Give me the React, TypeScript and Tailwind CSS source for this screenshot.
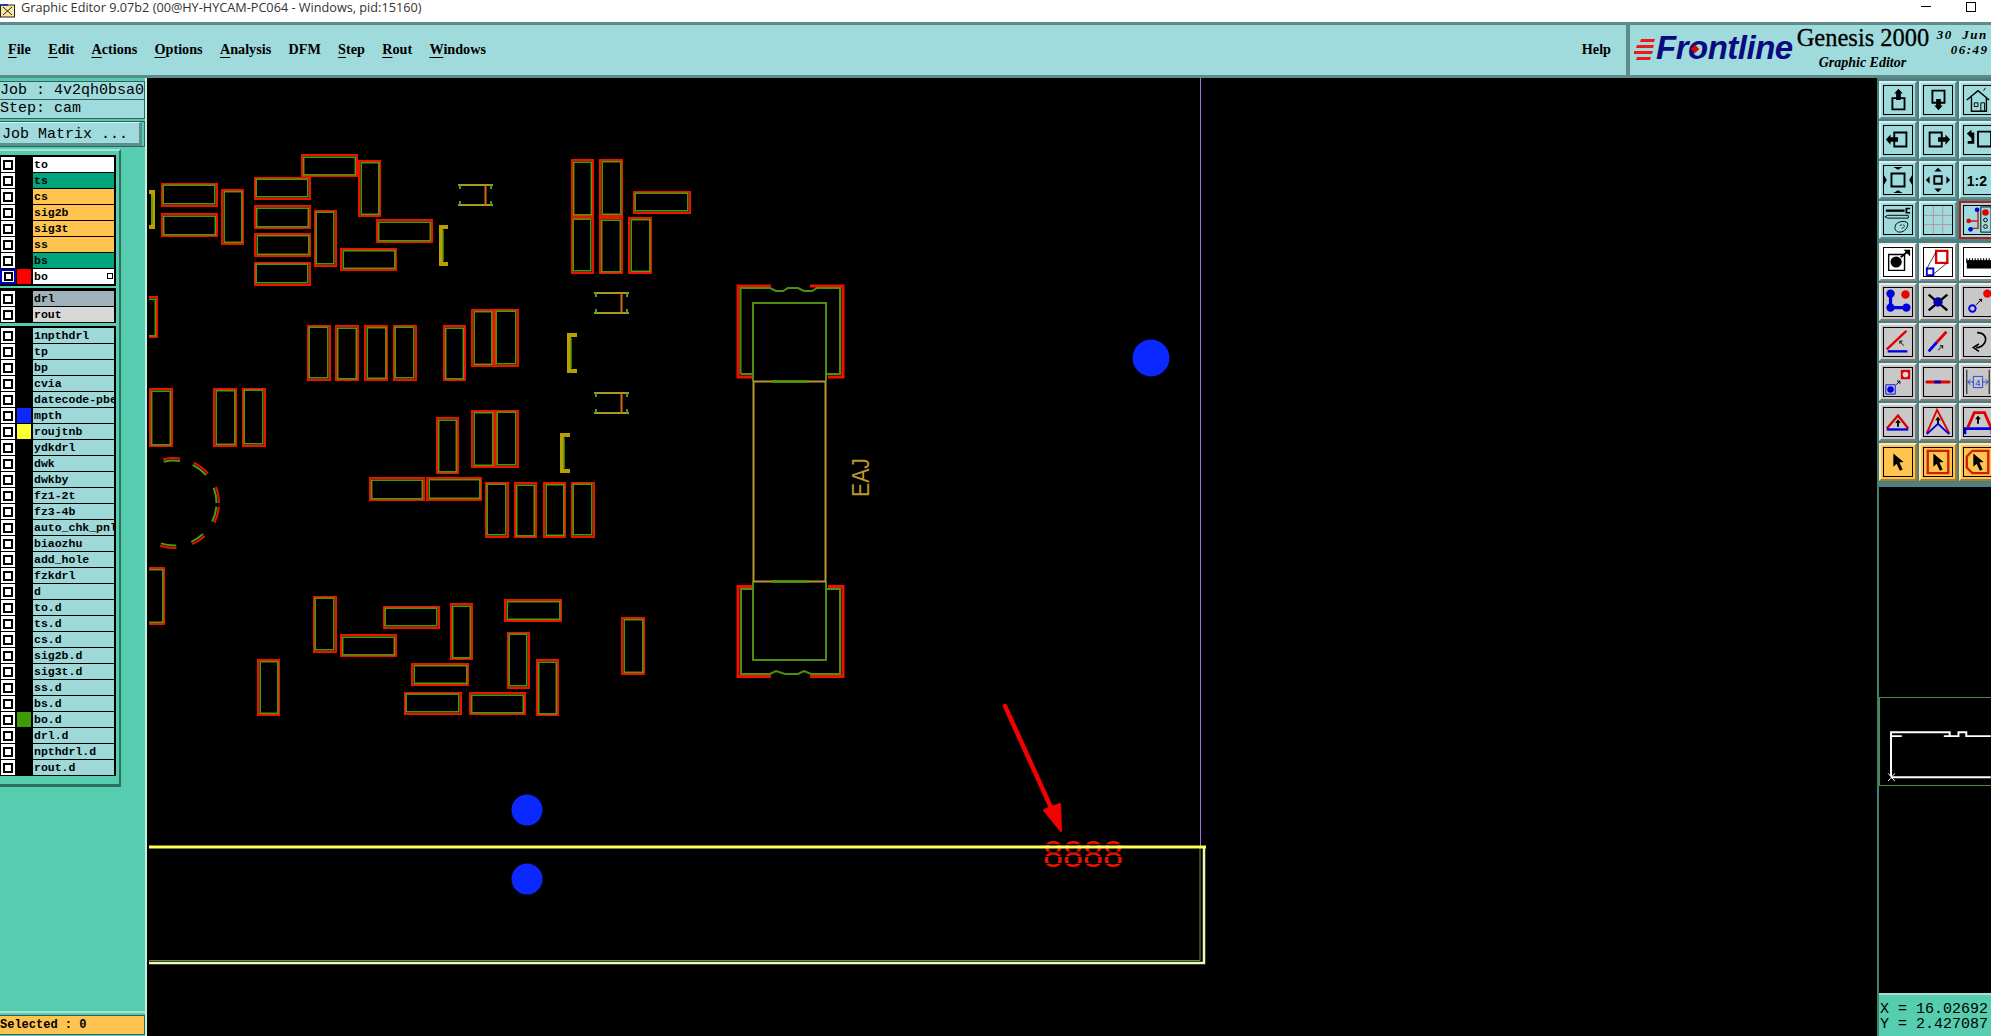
import type { ReactNode } from 'react';

const mono = "font-['Liberation_Mono',monospace] font-bold";

type Layer = { name: string; bg?: string; swatch?: string; active?: boolean };

const boardLayers: Layer[] = [
  { name: 'to', bg: 'bg-white' },
  { name: 'ts', bg: 'bg-[#00a57c]' },
  { name: 'cs', bg: 'bg-[#ffc44f]' },
  { name: 'sig2b', bg: 'bg-[#ffc44f]' },
  { name: 'sig3t', bg: 'bg-[#ffc44f]' },
  { name: 'ss', bg: 'bg-[#ffc44f]' },
  { name: 'bs', bg: 'bg-[#00a57c]' },
  { name: 'bo', bg: 'bg-white', swatch: 'bg-[#ff0000]', active: true },
];

const drillLayers: Layer[] = [
  { name: 'drl', bg: 'bg-[#9fb2ba]' },
  { name: 'rout', bg: 'bg-[#d8d8d8]' },
];

const miscLayers: Layer[] = [
  { name: '1npthdrl' },
  { name: 'tp' },
  { name: 'bp' },
  { name: 'cvia' },
  { name: 'datecode-pbe' },
  { name: 'mpth', swatch: 'bg-[#0a28ff]' },
  { name: 'roujtnb', swatch: 'bg-[#ffff33]' },
  { name: 'ydkdrl' },
  { name: 'dwk' },
  { name: 'dwkby' },
  { name: 'fz1-2t' },
  { name: 'fz3-4b' },
  { name: 'auto_chk_pnl' },
  { name: 'biaozhu' },
  { name: 'add_hole' },
  { name: 'fzkdrl' },
  { name: 'd' },
  { name: 'to.d' },
  { name: 'ts.d' },
  { name: 'cs.d' },
  { name: 'sig2b.d' },
  { name: 'sig3t.d' },
  { name: 'ss.d' },
  { name: 'bs.d' },
  { name: 'bo.d', swatch: 'bg-[#3f9a05]' },
  { name: 'drl.d' },
  { name: 'npthdrl.d' },
  { name: 'rout.d' },
];

const menus = ['File', 'Edit', 'Actions', 'Options', 'Analysis', 'DFM', 'Step', 'Rout', 'Windows'];

// x1, y1, x2, y2 in page pixels
const pads = [
  [161, 183, 218, 207], [161, 213, 218, 237], [221, 189, 244, 245], [254, 177, 311, 200],
  [254, 205, 311, 229], [254, 233, 311, 257], [254, 262, 311, 286], [301, 154, 358, 177],
  [358, 160, 381, 217], [314, 210, 337, 267], [376, 219, 433, 243], [340, 248, 397, 271],
  [307, 325, 331, 381], [335, 325, 359, 381], [364, 325, 388, 381], [393, 325, 417, 381],
  [443, 325, 466, 381], [471, 309, 494, 367], [494, 309, 519, 367],
  [149, 388, 173, 447], [213, 388, 237, 447], [242, 388, 266, 447],
  [436, 417, 459, 474], [471, 410, 495, 468], [495, 410, 519, 468],
  [369, 477, 425, 501], [426, 477, 482, 501], [485, 482, 509, 538], [514, 482, 537, 538],
  [543, 482, 566, 538], [571, 482, 595, 538],
  [571, 159, 594, 217], [599, 159, 623, 217], [571, 217, 594, 274], [599, 217, 623, 274],
  [628, 217, 652, 274], [633, 191, 691, 214],
  [130, 296, 158, 338], [130, 567, 165, 625], [313, 596, 337, 653], [340, 634, 397, 657],
  [257, 659, 280, 716], [383, 606, 440, 629], [450, 603, 473, 660], [504, 599, 562, 622],
  [507, 632, 530, 689], [536, 659, 559, 716], [411, 663, 469, 686], [404, 692, 462, 715],
  [469, 692, 526, 715], [621, 617, 645, 675],
];

const connectors = [
  [458, 184],
  [594, 292],
  [594, 392],
];

const ringArcs = [
  [-104, -82], [-64, -41], [-21, 0], [5, 26], [47, 66], [87, 108],
];

const arcPath = (r: number, from: number, to: number) => {
  const cx = 174;
  const cy = 503;
  const a = (from * Math.PI) / 180;
  const b = (to * Math.PI) / 180;
  return `M${cx + r * Math.cos(a)} ${cy + r * Math.sin(a)}A${r} ${r} 0 0 1 ${cx + r * Math.cos(b)} ${cy + r * Math.sin(b)}`;
};

const BoardView = () => (
  <svg className="block h-[958px] w-[1728px]" viewBox="149 78 1728 958" fill="none">
    <path d="M1200.5 78V847" stroke="#a070e0" strokeWidth="1" />
    {pads.map(([x1, y1, x2, y2]) => (
      <rect key={`r${x1}-${y1}`} x={x1 + 1} y={y1 + 1} width={x2 - x1 - 2} height={y2 - y1 - 2} stroke="#f01000" strokeWidth="2" />
    ))}
    <g stroke="#5a9a08" strokeWidth="1.5">
      {pads.map(([x1, y1, x2, y2], i) => {
        const dx = ((i * 7) % 3) * 0.5;
        const dy = ((i * 5) % 3) * 0.5;
        return <rect key={`g${x1}-${y1}`} x={x1 + 2.2 + dx} y={y1 + 2.2 + dy} width={x2 - x1 - 5.4} height={y2 - y1 - 5.4} />;
      })}
    </g>

    {connectors.map(([x, y]) => (
      <g key={`${x}-${y}`}>
        <path d={`M${x} ${y + 1}H${x + 35}M${x} ${y + 21}H${x + 35}`} stroke="#a89a20" strokeWidth="2" />
        <path d={`M${x + 27.5} ${y + 1}V${y + 21}`} stroke="#d06a10" strokeWidth="2" />
        <path d={`M${x + 2} ${y + 1}V${y + 5}M${x + 33} ${y + 1}V${y + 5}M${x + 2} ${y + 17}V${y + 21}M${x + 33} ${y + 17}V${y + 21}`} stroke="#4f9a10" strokeWidth="2" />
      </g>
    ))}

    <g stroke="#b8a000" strokeWidth="4">
      <path d="M448 227H441V264H448" />
      <path d="M577 335H569V371H577" />
      <path d="M570 435H562V471H570" />
      <path d="M149 192H153V227H149" />
    </g>
    <g stroke="#4f9a10" strokeWidth="1.5">
      <path d="M443 230V261M571 338V368M564 438V468M152 195V224" />
    </g>

    {ringArcs.map(([a, b]) => (
      <g key={a} strokeWidth="2">
        <path d={arcPath(45, a, b)} stroke="#e81000" />
        <path d={arcPath(42.5, a, b)} stroke="#4f9a10" />
      </g>
    ))}

    {/* connector part in the middle of the board */}
    <path d="M771 286H738V377H753M810 286H843V377H828M753 586.5H738V676.5H771M810 676.5H843V586.5H828" stroke="#f01000" strokeWidth="3" />
    <path d="M740.5 374V288H770L776 291H783L788 288H798L804 291H812L817 288H840V374H826M740.5 374H753M753 589H741V674H770L776 671L785 674H798L804 671L811 674H840V589H826" stroke="#4f8f10" strokeWidth="2" />
    <path d="M753 381V303H826V381M753 581V660H826V581" stroke="#4f8f10" strokeWidth="2" />
    <path d="M753.5 381V581M825.5 381V581M753 381.5H826M753 581.5H826" stroke="#b8962e" strokeWidth="2" />
    <path d="M772 381.5H809M772 581.5H809" stroke="#4f9a10" strokeWidth="2.5" />
    <text x="869" y="497" transform="rotate(-90 869 497)" fill="#b8962e" className="font-['Liberation_Sans',sans-serif] text-[24px]" textLength="39" lengthAdjust="spacingAndGlyphs">EAJ</text>

    <circle cx="1151" cy="358" r="18.5" fill="#0a28ff" />
    <circle cx="527" cy="810" r="15.5" fill="#0a28ff" />
    <circle cx="527" cy="879" r="15.5" fill="#0a28ff" />

    {/* the four digits are cut into segments by black strips */}
    <text x="1043" y="867" fill="#f01000" className="font-['Liberation_Sans',sans-serif] text-[36px]">8888</text>
    <path d="M1040 844.5H1124M1040 852H1124M1040 856.5H1124M1040 863.5H1124" stroke="#000" strokeWidth="1" />

    <path d="M149 960.5H1200V848" stroke="#5f9a40" strokeWidth="1" />
    <path d="M149 963H1204V848" stroke="#f6f6b8" strokeWidth="2.5" />
    <path d="M149 847H1206" stroke="#ffff55" strokeWidth="3" />

    <path d="M1005 706L1053 812" stroke="#f40000" strokeWidth="4.5" strokeLinecap="round" />
    <path d="M1044 810L1060 804L1061 831Z" fill="#f40000" stroke="#f40000" strokeWidth="2" strokeLinejoin="round" />
  </svg>
);

const LayerRow = ({ name, bg = 'bg-[#9ed8d9]', swatch, active }: Layer) => (
  <div className="flex h-[16px] pb-px">
    {active ? (
      <div className="flex h-[15px] w-[16px] items-center justify-center border-2 border-[#0000c0] bg-white">
        <div className="h-[9px] w-[9px] border-2 border-black bg-white" />
      </div>
    ) : (
      <div className="ml-px flex h-[15px] w-[14px] items-center justify-center bg-white">
        <div className="h-[10px] w-[10px] border-2 border-black bg-white" />
      </div>
    )}
    {!active && <div className="w-px" />}
    <div className={`ml-px h-[15px] w-[14px] ${swatch ?? 'bg-black'}`} />
    <div className={`relative ml-[2px] h-[15px] w-[81px] overflow-hidden whitespace-nowrap pl-[1px] text-[11.5px] leading-[15px] text-black ${mono} ${bg}`}>
      {name}
      {active && <span className="absolute right-[1px] top-[4px] h-[6px] w-[6px] border border-black bg-white" />}
    </div>
  </div>
);

const Frame = ({ children }: { children: ReactNode }) => (
  <svg className="h-full w-full" viewBox="0 0 30 30" fill="none">
    {children}
  </svg>
);

type Tone = 'teal' | 'white' | 'gray' | 'orange' | 'red';

const tones: Record<Tone, string> = {
  teal: 'bg-[#9fdbdc] border-t-[#d4f0f0] border-l-[#d4f0f0] border-b-[#5d8f8f] border-r-[#5d8f8f]',
  white: 'bg-white border-t-[#f0f0f0] border-l-[#f0f0f0] border-b-[#8a8a8a] border-r-[#8a8a8a]',
  gray: 'bg-[#c8c8c8] border-t-[#ececec] border-l-[#ececec] border-b-[#7c7c7c] border-r-[#7c7c7c]',
  orange: 'bg-[#ffc44f] border-t-[#ffe9b0] border-l-[#ffe9b0] border-b-[#a87d25] border-r-[#a87d25]',
  red: 'bg-[#9fdbdc] border-t-[#b02020] border-l-[#b02020] border-b-[#b02020] border-r-[#b02020]',
};

const Tool = ({ tone, children }: { tone: Tone; children: ReactNode }) => (
  <div className={`h-[38px] w-[38px] shrink-0 border-2 p-[2px] ${tones[tone]}`}>
    <div className="h-full w-full border border-black">
      <Frame>{children}</Frame>
    </div>
  </div>
);

const Pointer = () => <path d="M10 6L21 15L16.5 15.5L20 23L17 24.5L13.5 17L10 20Z" fill="#000" />;

const tealTools: ReactNode[] = [
  <><path d="M9 13H22V25H9Z" stroke="#000" strokeWidth="2" /><path d="M15.5 3L20 8H18V15H13V8H11Z" fill="#000" /></>,
  <><path d="M9 5H22V18H9Z" stroke="#000" strokeWidth="2" /><path d="M15.5 26L11 21H13V14H18V21H20Z" fill="#000" /></>,
  <><path d="M3 15L15 5L27 15M8 12V27H24V12M8 27" stroke="#000" strokeWidth="1.5" /><path d="M11 18H15V22H11ZM18 18H22V27H18Z" stroke="#000" /><path d="M21 5L23 2" stroke="#000" /></>,
  <><path d="M11 7H24V22H11Z" stroke="#000" strokeWidth="2" /><path d="M2 14.5L7 9V12H15V17H7V20Z" fill="#000" /></>,
  <><path d="M6 7H19V22H6Z" stroke="#000" strokeWidth="2" /><path d="M28 14.5L23 9V12H15V17H23V20Z" fill="#000" /></>,
  <><path d="M15 6H29V22H15Z" stroke="#000" strokeWidth="2" /><path d="M3 8L8 4V7H11V19H4V16H8V11H8V13Z" fill="#000" /></>,
  <><path d="M8 8H22V22H8Z" stroke="#000" strokeWidth="2" /><path d="M10 1H20L15 4ZM10 29H20L15 26ZM0 10V20L3 15ZM30 10V20L27 15Z" fill="#000" /></>,
  <><path d="M11 11H19V19H11Z" stroke="#000" strokeWidth="2" /><path d="M11 6H19L15 2ZM11 24H19L15 28ZM6 11V19L2 15ZM24 11V19L28 15Z" fill="#000" /></>,
  <text x="3" y="21" fill="#000" className="font-['Liberation_Sans',sans-serif] text-[15px] font-bold">1:2</text>,
  <><path d="M2 5H22" stroke="#000" strokeWidth="2.5" /><path d="M23 2H28V3.5H25V6.5H28V8H23Z" fill="#000" /><path d="M4 13H26V10H4L1 11.5Z" stroke="#000" /><path d="M12 22C12 17 22 15 25 18C27 22 22 28 17 28C13 28 11 25 12 22Z" stroke="#000" /><path d="M17 21L19 20M21 20L22 22M19 24L21 23" stroke="#000" /></>,
  <path d="M0 10H30M0 20H30M10 0V30M20 0V30" stroke="#c08aa0" />,
  <><path d="M6 16H15V4M15 16V24H8" stroke="#d01818" strokeWidth="1.5" /><circle cx="5" cy="16" r="2.5" fill="#e00000" /><circle cx="14" cy="4" r="2.5" fill="#0000e0" /><circle cx="7" cy="25" r="2.5" fill="#0000e0" /><path d="M18 1H29V28H18Z" stroke="#000" /><circle cx="23" cy="7" r="3.5" fill="#e00000" /><circle cx="23" cy="15" r="2" stroke="#000" /><circle cx="23" cy="22" r="2" stroke="#000" /></>,
];

const grayTools: { tone: Tone; icon: ReactNode }[] = [
  { tone: 'white', icon: <><path d="M5 7H22V24H5Z" stroke="#000" strokeWidth="1.5" /><circle cx="13" cy="15" r="6" fill="#000" /><path d="M18 10L25 4" stroke="#000" strokeWidth="2" /><path d="M21 2H28V9Z" fill="#000" /></> },
  { tone: 'white', icon: <><path d="M13 3H25V16H13Z" stroke="#e00000" strokeWidth="2.5" /><path d="M3 22H10V29H3Z" stroke="#0000e0" strokeWidth="2" /><path d="M3 22L13 4M10 28L25 16" stroke="#000" strokeWidth="0.8" /></> },
  { tone: 'white', icon: <><path d="M3 13V22H30V13" fill="#000" /><path d="M3 11V16M6 11V16M9 11V16M12 11V16M15 11V16M18 11V16M21 11V16M24 11V16M27 11V16" stroke="#000" strokeWidth="1.2" /></> },
  { tone: 'gray', icon: <><path d="M7 7V21H24" stroke="#0000e0" strokeWidth="3.5" /><circle cx="7" cy="6" r="4.5" fill="#0000e0" /><circle cx="7" cy="21" r="4.5" fill="#0000e0" /><circle cx="24" cy="21" r="4.5" fill="#0000e0" /><circle cx="23" cy="7" r="4.5" fill="#f00000" /></> },
  { tone: 'gray', icon: <><path d="M5 7L25 24M25 7L5 24" stroke="#000" strokeWidth="2.5" /><circle cx="15" cy="15" r="5" fill="#0000a0" /></> },
  { tone: 'gray', icon: <><circle cx="9" cy="22" r="3.5" stroke="#0000e0" strokeWidth="2" /><circle cx="25" cy="6" r="4.5" fill="#f00000" /><path d="M13 18L19 12M19 12L16 12.5M19 12L18.5 15" stroke="#000" /></> },
  { tone: 'gray', icon: <><path d="M3 23L24 3" stroke="#e00000" strokeWidth="2.5" /><path d="M4 25H25" stroke="#0000e0" strokeWidth="2.5" /><path d="M21 19L17 14M17 14V17M17 14H20" stroke="#000" /></> },
  { tone: 'gray', icon: <><path d="M5 25L14 15" stroke="#0000e0" strokeWidth="3" /><path d="M14 15L24 4" stroke="#e00000" strokeWidth="3" /><path d="M15 24L20 19M20 19H17M20 19V22" stroke="#000" /></> },
  { tone: 'gray', icon: <path d="M14 5C22 5 25 11 22 16C20 19 17 21 13 21M16 17L10 21L16 25" stroke="#000" strokeWidth="1.8" /> },
  { tone: 'gray', icon: <><path d="M18 2H28V12H18Z" fill="#e00000" /><circle cx="23" cy="7" r="3" fill="#d8d8d8" /><path d="M2 18H12V28H2Z" stroke="#0000e0" /><circle cx="7" cy="23" r="3.5" fill="#0000e0" /><path d="M13 18L17 14M17 14H14M17 14V17" stroke="#000" /></> },
  { tone: 'gray', icon: <><path d="M3 15H27" stroke="#e00000" strokeWidth="3" strokeLinecap="round" /><path d="M11 15H18" stroke="#0000c0" strokeWidth="3" /></> },
  { tone: 'gray', icon: <><path d="M3 2V28M27 2V28" stroke="#000" /><path d="M4 15H10M20 15H26M4 15L7 12M4 15L7 18M26 15L23 12M26 15L23 18M10 9H20V21H10Z" stroke="#2040d0" /><text x="12" y="19" fill="#2040d0" className="font-['Liberation_Sans',sans-serif] text-[10px]">4</text></> },
  { tone: 'gray', icon: <><path d="M3 22L15 8L26 22" stroke="#e00000" strokeWidth="2.5" /><path d="M3 23H26" stroke="#0000e0" strokeWidth="2.5" /><path d="M15 12L12 16H14V20H16V16H18Z" fill="#000" /></> },
  { tone: 'gray', icon: <><path d="M3 27L14 2L27 27" stroke="#e00000" strokeWidth="2" /><path d="M3 28L15 17L27 28" stroke="#0000e0" strokeWidth="2" /><path d="M15 9L12 13H14V17H16V13H18Z" fill="#000" /></> },
  { tone: 'gray', icon: <><path d="M4 21L11 5H22L29 21" stroke="#e00000" strokeWidth="3" /><path d="M1 28V22H30V28" stroke="#0000e0" strokeWidth="3" /><path d="M15 8L12 12H14V17H16V12H18Z" fill="#000" /></> },
  { tone: 'orange', icon: <Pointer /> },
  { tone: 'orange', icon: <><path d="M4 3H26V27H4Z" stroke="#d02000" strokeWidth="2.5" /><Pointer /></> },
  { tone: 'orange', icon: <><path d="M9 3H26V27H9L3 21V9Z" stroke="#d02000" strokeWidth="2.5" /><Pointer /></> },
];

const ToolGrid = ({ children }: { children: ReactNode }) => (
  <div className="flex w-[120px] flex-wrap gap-[2px]">{children}</div>
);

export default function App() {
  return (
    <div className="flex h-[1036px] w-[1991px] flex-col overflow-hidden bg-black">
      {/* window title */}
      <header className="flex h-[22px] shrink-0 items-center bg-white text-[#333]">
        <svg className="h-[14px] w-[16px] shrink-0" viewBox="0 0 16 14" fill="none">
          <rect x="0.5" y="1" width="14" height="12" fill="#f8e8a0" stroke="#222" />
          <path d="M3 3L12 11M12 3L3 11" stroke="#222" />
          <path d="M0 1H8" stroke="#2040a0" strokeWidth="2" />
        </svg>
        <span className="ml-[5px] -mt-[8px] font-['Open_Sans',sans-serif] text-[12.7px] leading-none">Graphic Editor 9.07b2 (00@HY-HYCAM-PC064 - Windows, pid:15160)</span>
        <div className="ml-auto -mt-[9px] mr-[15px] flex items-center gap-[35px]">
          <div className="h-px w-[10px] bg-black" />
          <div className="h-[10px] w-[10px] border border-black" />
        </div>
      </header>

      {/* menu bar */}
      <div className="flex h-[56px] shrink-0 border-t-[3px] border-b-[3px] border-t-[#5f8a8a] border-b-[#5f8a8a] bg-[#9fdbdc] font-['Liberation_Serif',serif] text-black">
        <nav className="flex flex-1 items-center justify-between border-r-2 border-r-[#5f8a8a] pb-[1px] pl-[8px] pr-[15px] text-[14.2px] font-bold">
          <div className="flex gap-[17.3px]">
            {menus.map((m) => (
              <span key={m}>
                {m === 'DFM' ? m : <><span className="underline underline-offset-[3px]">{m[0]}</span>{m.slice(1)}</>}
              </span>
            ))}
          </div>
          <span>Help</span>
        </nav>
        <div className="relative flex w-[363px] shrink-0 border-l-2 border-l-[#5f8a8a] pl-[4px]">
          <svg className="mt-[11px] h-[26px] w-[22px] shrink-0" viewBox="0 0 22 26">
            <path d="M7 3H21L20 6H6ZM3 9H20L19 12H2ZM0 15H19L18 18H0ZM3 21H17L16 24H2Z" fill="#f01818" />
          </svg>
          <span className="mt-[4px] font-['Liberation_Sans',sans-serif] text-[33px] font-bold italic leading-[38px] tracking-[-0.5px] text-[#0b0b80]">Frontline</span>
          <span className="absolute left-[62px] top-[21px] h-[6px] w-[6px] rotate-45 bg-[#e00000]" />
          <div className="ml-[4px] flex w-[140px] shrink-0 flex-col">
            <span className="-mt-[1px] whitespace-nowrap text-[24.5px] leading-[28px] [-webkit-text-stroke:0.3px_black]">Genesis 2000</span>
            <span className="ml-[22px] mt-[2px] text-[14px] font-bold italic leading-[18px]">Graphic Editor</span>
          </div>
          <div className="flex flex-col whitespace-pre text-[13px] font-bold italic leading-[15px] tracking-[1.5px]">
            <span className="mt-[2px]">30  Jun</span>
            <span className="ml-[14px]">06:49</span>
          </div>
        </div>
      </div>

      <div className="flex min-h-0 flex-1">
        {/* left column */}
        <aside className="flex w-[147px] shrink-0 flex-col border-r-2 border-r-[#c4f0e6] bg-[#55cdae]">
          <div className={`mt-[3px] h-[38px] overflow-hidden border-y border-r border-[#2f5f5f] bg-[#9fdbdc] text-[15px] leading-[18px] text-black ${mono} font-normal`}>
            <div className="h-[18px] whitespace-pre border-b border-[#2f5f5f]">Job : 4v2qh0bsa0</div>
            <div className="h-[18px] whitespace-pre">Step: cam</div>
          </div>
          <div className="mt-[2px] border-y border-r border-[#2f5f5f] pr-[2px]">
            <div className={`h-[24px] whitespace-pre border-b-[3px] border-r-[3px] border-t border-b-[#5d8f8f] border-r-[#5d8f8f] border-t-[#d4f0f0] bg-[#9fdbdc] pl-[2px] text-[15px] leading-[24px] text-black ${mono} font-normal`}>Job Matrix ...</div>
          </div>
          <div className="mt-[2px] h-[638px] w-[121px] border-t-2 border-b-[3px] border-r-2 border-t-[#9fe5d2] border-b-[#2f6f60] border-r-[#2f6f60] pt-[4px]">
            <div className="w-[116px] bg-black pb-px pt-[2px]">
              {boardLayers.map((l) => <LayerRow key={l.name} {...l} />)}
            </div>
            <div className="h-[2px] w-[116px]" />
            <div className="w-[116px] bg-black pt-[3px]">
              {drillLayers.map((l) => <LayerRow key={l.name} {...l} />)}
            </div>
            <div className="h-[3px] w-[116px]" />
            <div className="w-[116px] bg-black pt-[2px]">
              {miscLayers.map((l) => <LayerRow key={l.name} {...l} />)}
            </div>
          </div>
          <div className="mt-auto border-t-2 border-t-[#9fe5d2] pb-px pt-[2px]">
            <div className={`h-[20px] w-[145px] whitespace-pre border-y border-r border-[#2f5f5f] bg-[#ffc44f] text-[12px] leading-[18px] text-black ${mono}`}>Selected : 0</div>
          </div>
        </aside>

        {/* board */}
        <main className="min-w-0 flex-1 pl-[2px]">
          <BoardView />
        </main>

        {/* right tool column */}
        <aside className="flex w-[114px] shrink-0 flex-col overflow-hidden border-l-2 border-l-[#3f7f72]">
          <div className="bg-[#4f7f7f] pb-[6px] pt-[3px]">
            <ToolGrid>
              {tealTools.map((icon, i) => (
                <Tool key={i} tone={i === 11 ? 'red' : 'teal'}>{icon}</Tool>
              ))}
            </ToolGrid>
            <div className="h-[4px]" />
            <ToolGrid>
              {grayTools.map((t, i) => (
                <Tool key={i} tone={t.tone}>{t.icon}</Tool>
              ))}
            </ToolGrid>
          </div>
          <div className="mt-[210px] h-[89px] border-y border-l border-[#4f9040] bg-black">
            <svg className="block h-full w-full" viewBox="1878 696 113 89" fill="none">
              <path d="M1889 776V731H1949V735H1958V731H1966V735H1991M1889 735H1900M1943 735H1958M1889 777H1991" stroke="#fff" strokeWidth="2" />
              <path d="M1886 773L1893 781M1893 773L1886 781" stroke="#fff" />
            </svg>
          </div>
          <div className={`mt-auto h-[43px] whitespace-pre border-t-2 border-t-[#a8e0d0] bg-[#55cdae] pl-px pt-[7px] text-[15px] leading-[15px] text-black ${mono} font-normal`}>
            <div>X = 16.02692</div>
            <div>Y = 2.427087</div>
          </div>
        </aside>
      </div>
    </div>
  );
}
